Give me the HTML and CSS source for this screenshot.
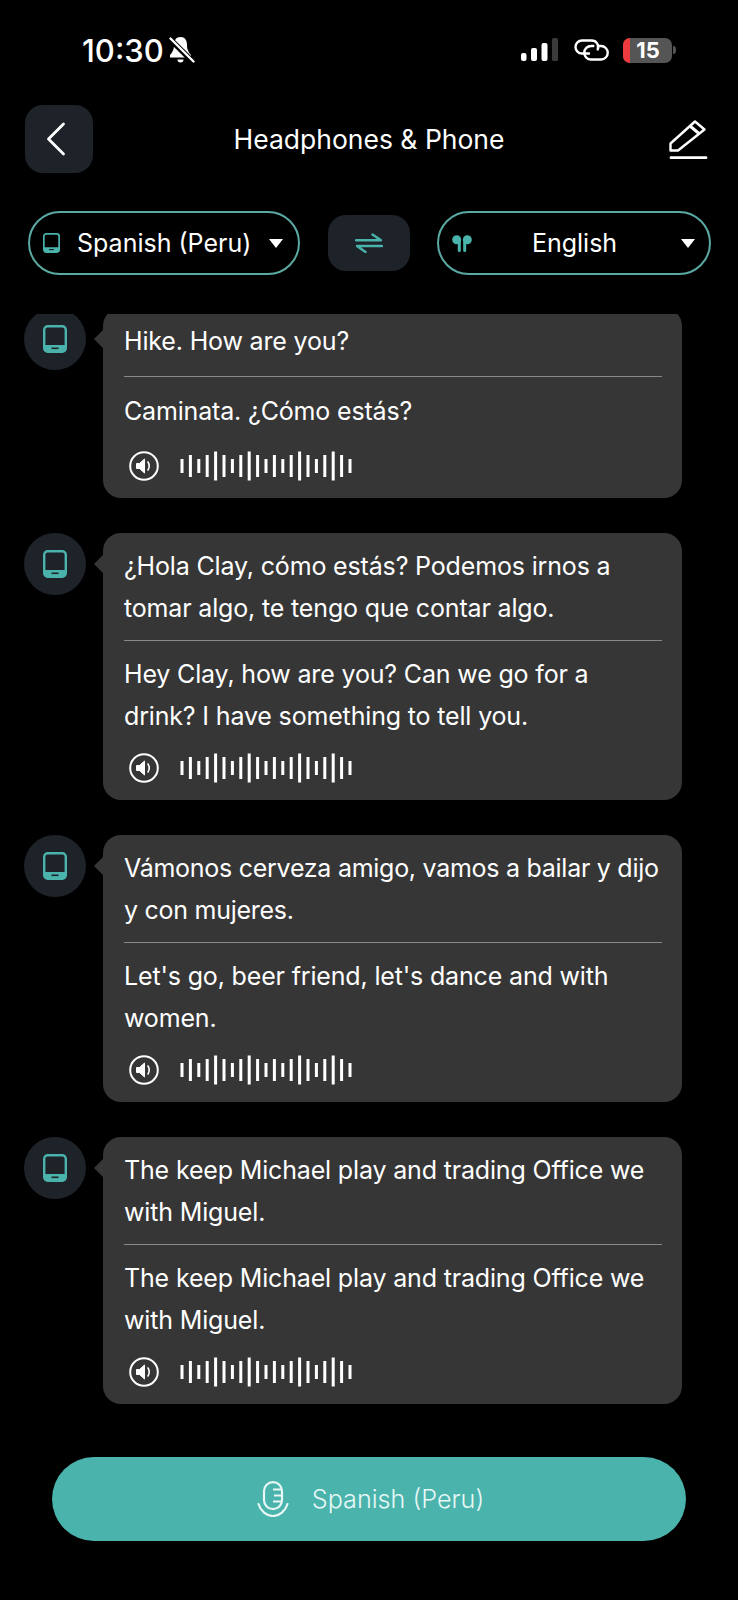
FILE: index.html
```html
<!DOCTYPE html>
<html lang="en">
  <head>
    <meta charset="UTF-8" />
    <meta name="viewport" content="width=device-width, initial-scale=1.0" />
    <title>Headphones &amp; Phone</title>
    <link rel="stylesheet" href="styles.css">
  </head>
  <body>
    <svg class="defs" width="0" height="0">
      <symbol id="tablet" viewBox="0 0 24 28">
        <rect x="1.2" y="1.2" width="21.6" height="25.6" rx="3.5" fill="none" stroke="currentColor" stroke-width="2.4" />
        <path d="M1.200 20h21.600v3.300a3.500 3.500 0 0 1-3.500 3.500H4.700a3.500 3.500 0 0 1-3.500-3.500z" fill="currentColor" />
        <path d="M8.500 23.300h7" stroke="#1e2229" stroke-width="1.600" />
      </symbol>
      <symbol id="wave" viewBox="0 0 172 30">
        <g stroke="#fff" stroke-width="3" fill="none">
          <path d="M2 8v14M10.400 4v22M18.800 8v14M27.200 4v22M35.600 .5v29M44 4v22M52.400 8v14M60.800 4v22M69.200 .5v29M77.600 4v22M86 8v14M94.400 4v22M102.800 8v14M111.200 4v22M119.600 .5v29M128 4v22M136.400 8v14M144.800 4v22M153.200 .5v29M161.600 4v22M170 8v14" />
        </g>
      </symbol>
      <symbol id="speaker" viewBox="0 0 30 30">
        <circle cx="15" cy="15" r="13.800" fill="none" stroke="#fff" stroke-width="2" />
        <path d="M7.500 12.500h3l5-4.500v14l-5-4.500h-3z" fill="#fff" stroke="#fff" stroke-linejoin="round" />
        <path d="M19 11c1.500 2.500 1.500 5.500 0 8" fill="none" stroke="#fff" stroke-width="1.600" stroke-linecap="round" />
      </symbol>
    </svg>

    <div class="status">
      <div class="status-left">
        <span class="time">10:30</span>
        <svg class="bell" viewBox="0 0 26 28" width="26" height="28">
          <path d="M11.500 1C7 1 5 4.500 5 9c0 5-1.500 7-4 10v2.500h21V19c-2.500-3-4-5-4-10 0-4.500-2-8-6.500-8z" fill="#fff" />
          <path d="M8.500 23.500h6a3 3 0 0 1-6 0z" fill="#fff" />
          <path d="M0 2l25 25" stroke="#000" stroke-width="5.500" />
          <path d="M1.500 2.500l23 23" stroke="#fff" stroke-width="2.400" stroke-linecap="round" />
        </svg>
      </div>
      <div class="status-right">
        <svg viewBox="0 0 37 25" width="37" height="25">
          <rect x="0" y="15" width="5.500" height="8" rx="2" fill="#fff" />
          <rect x="10" y="10" width="6" height="13" rx="2" fill="#fff" />
          <rect x="20.500" y="5" width="6" height="18" rx="2" fill="#fff" />
          <rect x="31" y="0" width="6" height="23" rx="1.500" fill="#3a3a3a" />
        </svg>
        <svg class="link" viewBox="0 0 35 22" width="35" height="22">
          <path d="M15 14.500H8a6.500 6.500 0 0 1 0-13h9.500a6.500 6.500 0 0 1 6.200 9" fill="none" stroke="#fff" stroke-width="2.400" stroke-linecap="round" />
          <path d="M25 7h2a6.700 6.700 0 0 1 0 13.500H17a6.700 6.700 0 0 1-6.700-6.700c0-3.800 3-6.800 7-6.800h2" fill="none" stroke="#fff" stroke-width="2.400" stroke-linecap="round" />
        </svg>
        <div class="battery">
          <span class="battery-low"></span>
          <span class="battery-num">15</span>
        </div>
        <span class="battery-cap"></span>
      </div>
    </div>

    <div class="header">
      <button class="back">
        <svg viewBox="0 0 20 34" width="20" height="34">
          <path d="M17.500 2L2.500 17l15 15" fill="none" stroke="#fff" stroke-width="2.800" stroke-linecap="round" stroke-linejoin="round" />
        </svg>
      </button>
      <div class="title">Headphones &amp; Phone</div>
      <svg class="edit" viewBox="0 0 39 40" width="39" height="40">
        <path d="M1.500 30.500v-7L26 1.500l9.500 8L9 30.500z" fill="none" stroke="#fff" stroke-width="2.400" stroke-linejoin="round" />
        <path d="M21 6l9.500 8" stroke="#fff" stroke-width="3" />
        <path d="M2 37.700h35" stroke="#fff" stroke-width="2.800" stroke-linecap="round" />
      </svg>
    </div>

    <div class="langs">
      <div class="pill">
        <svg class="pill-icon" width="17" height="20"><use href="#tablet" /></svg>
        <span class="pill-text">Spanish (Peru)</span>
        <span class="caret"></span>
      </div>
      <button class="swap">
        <svg viewBox="0 0 28 20" width="28" height="20">
          <path d="M1 7.300h25l-8.500-5.800M27 13H2l8.500 6" fill="none" stroke="#4ab3ac" stroke-width="2.400" stroke-linecap="round" stroke-linejoin="round" />
        </svg>
      </button>
      <div class="pill pill_right">
        <svg class="pods" viewBox="0 0 20 17" width="20" height="17">
          <circle cx="4.700" cy="4.700" r="4.500" fill="currentColor" />
          <path d="M5.800 4h3v11.500a1.500 1.500 0 0 1-3 0z" fill="currentColor" />
          <circle cx="15.300" cy="4.700" r="4.500" fill="currentColor" />
          <path d="M11.200 4h3v11.500a1.500 1.500 0 0 1-3 0z" fill="currentColor" />
        </svg>
        <span class="pill-text pill-text_center">English</span>
        <span class="caret"></span>
      </div>
    </div>

    <div class="chat">
      <ul class="list">
        <li class="row">
          <div class="avatar"><svg width="24" height="28"><use href="#tablet" /></svg></div>
          <div class="bubble bubble_short">
            <p class="line">Hike. How are you?</p>
            <hr class="rule" />
            <p class="line">Caminata. ¿Cómo estás?</p>
            <div class="audio">
              <svg width="30" height="30"><use href="#speaker" /></svg>
              <svg width="172" height="30"><use href="#wave" /></svg>
            </div>
          </div>
        </li>
        <li class="row">
          <div class="avatar"><svg width="24" height="28"><use href="#tablet" /></svg></div>
          <div class="bubble">
            <p class="line">¿Hola Clay, cómo estás? Podemos irnos a tomar algo, te tengo que contar algo.</p>
            <hr class="rule" />
            <p class="line">Hey Clay, how are you? Can we go for a drink? I have something to tell you.</p>
            <div class="audio">
              <svg width="30" height="30"><use href="#speaker" /></svg>
              <svg width="172" height="30"><use href="#wave" /></svg>
            </div>
          </div>
        </li>
        <li class="row">
          <div class="avatar"><svg width="24" height="28"><use href="#tablet" /></svg></div>
          <div class="bubble">
            <p class="line line_tight">Vámonos cerveza amigo, vamos a bailar y dijo y con mujeres.</p>
            <hr class="rule" />
            <p class="line">Let's go, beer friend, let's dance and with women.</p>
            <div class="audio">
              <svg width="30" height="30"><use href="#speaker" /></svg>
              <svg width="172" height="30"><use href="#wave" /></svg>
            </div>
          </div>
        </li>
        <li class="row">
          <div class="avatar"><svg width="24" height="28"><use href="#tablet" /></svg></div>
          <div class="bubble">
            <p class="line">The keep Michael play and trading Office we with Miguel.</p>
            <hr class="rule" />
            <p class="line">The keep Michael play and trading Office we with Miguel.</p>
            <div class="audio">
              <svg width="30" height="30"><use href="#speaker" /></svg>
              <svg width="172" height="30"><use href="#wave" /></svg>
            </div>
          </div>
        </li>
      </ul>
    </div>

    <button class="mic">
      <svg viewBox="0 0 32 36" width="32" height="36">
        <rect x="7" y="1.100" width="18" height="27" rx="9" fill="none" stroke="#e6f7f5" stroke-width="2.200" />
        <path d="M16 8.500h9M17 14.500h8M16 20.500h9" fill="none" stroke="#e6f7f5" stroke-width="2.200" />
        <path d="M1.500 23c2 7 8 12 14.500 12s12.500-5 14.500-12" fill="none" stroke="#e6f7f5" stroke-width="2.200" stroke-linecap="round" />
      </svg>
      <span class="mic-text">Spanish (Peru)</span>
    </button>
  </body>
</html>
```

FILE: styles.css
```css
html,
body {
  margin: 0;
  padding: 0;
}

body {
  width: 738px;
  height: 1600px;
  overflow: hidden;
  background-color: #000;
  color: #fff;
  font-family: Inter, "Liberation Sans", sans-serif;
}

.defs {
  display: block;
  height: 0;
}

button {
  border: none;
  padding: 0;
  font-family: inherit;
}

.status {
  display: flex;
  justify-content: space-between;
  align-items: center;
  height: 105px;
  box-sizing: border-box;
  padding: 0 62px 5px 82px;
}

.status-left,
.status-right {
  display: flex;
  align-items: center;
}

.time {
  font-size: 31px;
  font-weight: 500;
}

.bell {
  margin-left: 5px;
}

.link {
  margin-left: 16px;
}

.battery {
  display: flex;
  width: 49px;
  height: 25px;
  margin-left: 14px;
  border-radius: 7px;
  background-color: #555;
  overflow: hidden;
}

.battery-low {
  width: 7px;
  background-color: #ec3a3f;
}

.battery-num {
  flex: 1;
  text-align: center;
  font-size: 22px;
  font-weight: 700;
  line-height: 25px;
  margin-right: 6px;
}

.battery-cap {
  width: 3px;
  height: 8px;
  margin-left: 1px;
  border-radius: 0 3px 3px 0;
  background-color: #555;
}

.header {
  display: grid;
  grid-template-columns: 1fr auto 1fr;
  align-items: center;
  height: 68px;
  padding: 0 25px;
}

.back {
  display: flex;
  justify-content: center;
  align-items: center;
  width: 68px;
  height: 68px;
  padding-right: 6px;
  box-sizing: border-box;
  border-radius: 18px;
  background-color: #1e2229;
}

.title {
  font-size: 26.5px;
}

.edit {
  justify-self: end;
  margin: 2px 5px 0 0;
}

.langs {
  display: flex;
  justify-content: space-between;
  align-items: center;
  height: 64px;
  margin-top: 38px;
  padding: 0 27px 0 28px;
}

.pill {
  display: flex;
  align-items: center;
  width: 272px;
  height: 64px;
  box-sizing: border-box;
  padding: 0 15px 0 13px;
  border: 2px solid #5aa9a3;
  border-radius: 32px;
  color: #4ab3ac;
}

.pill_right {
  width: 274px;
  padding-right: 14px;
}

.pill-text {
  flex: 1;
  margin-left: 17px;
  color: #fff;
  font-size: 25px;
}

.pill-text_center {
  margin: 0 4px 0 0;
  text-align: center;
}

.pill-icon,
.pods {
  flex-shrink: 0;
}

.caret {
  width: 0;
  height: 0;
  border-left: 7px solid transparent;
  border-right: 7px solid transparent;
  border-top: 9px solid #fff;
}

.swap {
  display: flex;
  justify-content: center;
  align-items: center;
  width: 82px;
  height: 56px;
  border-radius: 18px;
  background-color: #1e2229;
}

.chat {
  height: 1143px;
  margin-top: 39px;
  overflow: hidden;
}

.list {
  list-style: none;
  margin: -6px 0 0;
  padding: 0;
}

.row {
  display: flex;
  align-items: flex-start;
  margin-bottom: 35px;
  padding-left: 24px;
}

.avatar {
  display: flex;
  flex-shrink: 0;
  justify-content: center;
  align-items: center;
  width: 62px;
  height: 62px;
  border-radius: 50%;
  background-color: #1e2229;
  color: #4ab3ac;
}

.bubble {
  position: relative;
  width: 579px;
  margin-left: 17px;
  box-sizing: border-box;
  padding: 12px 20px 17px 21px;
  border-radius: 18px;
  background-color: #363636;
}

.bubble::before {
  content: "";
  position: absolute;
  left: -9px;
  top: 21px;
  width: 0;
  height: 0;
  border-top: 10px solid transparent;
  border-bottom: 10px solid transparent;
  border-right: 10px solid #363636;
}

.line {
  margin: 0;
  font-size: 25px;
  letter-spacing: -0.16px;
  line-height: 42px;
}

.line_tight {
  margin-right: -2px;
  letter-spacing: -0.27px;
}

.rule {
  height: 1px;
  margin: 11px 0 12px;
  border: none;
  background-color: #8a8a8a;
}

.bubble_short .rule {
  margin: 14px 0 13px;
}

.bubble_short .audio {
  margin-top: 19px;
}

.audio {
  display: flex;
  align-items: center;
  gap: 21px;
  margin-top: 16px;
  padding-left: 5px;
}

.mic {
  display: flex;
  justify-content: center;
  align-items: center;
  gap: 23px;
  width: 634px;
  height: 84px;
  margin: 0 0 0 52px;
  padding-left: 3px;
  border-radius: 42px;
  background-color: #4ab3ac;
  color: #e6f7f5;
}

.mic-text {
  font-size: 25.2px;
  font-weight: 300;
}
```
